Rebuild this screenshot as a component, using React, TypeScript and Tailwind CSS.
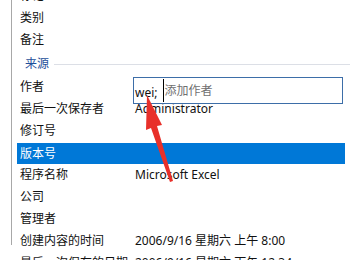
import React from "react";

const font = { fontFamily: '"Noto Sans", "Noto Sans CJK SC", sans-serif' };

function Row({ label, value, selected }: { label: string; value?: string; selected?: boolean }) {
  return (
    <div className="h-[22px] flex items-stretch">
      <div
        className={
          "ml-[5px] w-[328px] flex items-center pl-[3px] " +
          (selected ? "bg-[#0078d7] text-white mt-px" : "text-[#111]")
        }
      >
        <span className="w-[115px] shrink-0 whitespace-nowrap">{label}</span>
        {value ? <span className="whitespace-nowrap">{value}</span> : null}
      </div>
    </div>
  );
}

export default function App() {
  return (
    <div
      className="relative w-[350px] h-[260px] overflow-hidden bg-white text-[12px] leading-none"
      style={font}
    >
      <div className="ml-[11px] border-l border-[#a8a8a8] h-full">
        <div className="mt-[-15px] flex flex-col">
          <Row label="标记" />
          <Row label="类别" />
          <Row label="备注" />
          <div className="h-[25px] flex items-center pl-[13px]">
            <span className="text-[#1e4f9a] whitespace-nowrap">来源</span>
            <div className="flex-1 ml-[5px] h-px bg-[#dcdfe6] mt-[2px]" />
          </div>
          <Row label="作者" />
          <Row label="最后一次保存者" value="Administrator" />
          <Row label="修订号" />
          <Row label="版本号" selected />
          <Row label="程序名称" value="Microsoft Excel" />
          <Row label="公司" />
          <Row label="管理者" />
          <Row label="创建内容的时间" value="2006/9/16 星期六 上午 8:00" />
          <Row label="最后一次保存的日期" value="2006/9/16 星期六 下午 12:34" />
        </div>
      </div>

      {/* editing box */}
      <div className="absolute left-[133px] top-[77px] w-[210px] h-[27px] border border-[#3d6ea8] bg-white flex items-stretch">
        <span className="self-end mb-[4px] ml-[1px] text-[#111] whitespace-nowrap">wei;</span>
        <span className="w-px bg-black ml-[5px] mt-px mb-px" />
        <span className="self-center ml-[1px] text-[#707070] whitespace-nowrap">添加作者</span>
      </div>

      {/* red arrow */}
      <svg className="absolute left-0 top-0" width="350" height="260" viewBox="0 0 350 260">
        <polygon
          points="147,95 162,125 157,126 173,181 170,182 151,128 146,130"
          fill="#e8302a"
        />
      </svg>
    </div>
  );
}
